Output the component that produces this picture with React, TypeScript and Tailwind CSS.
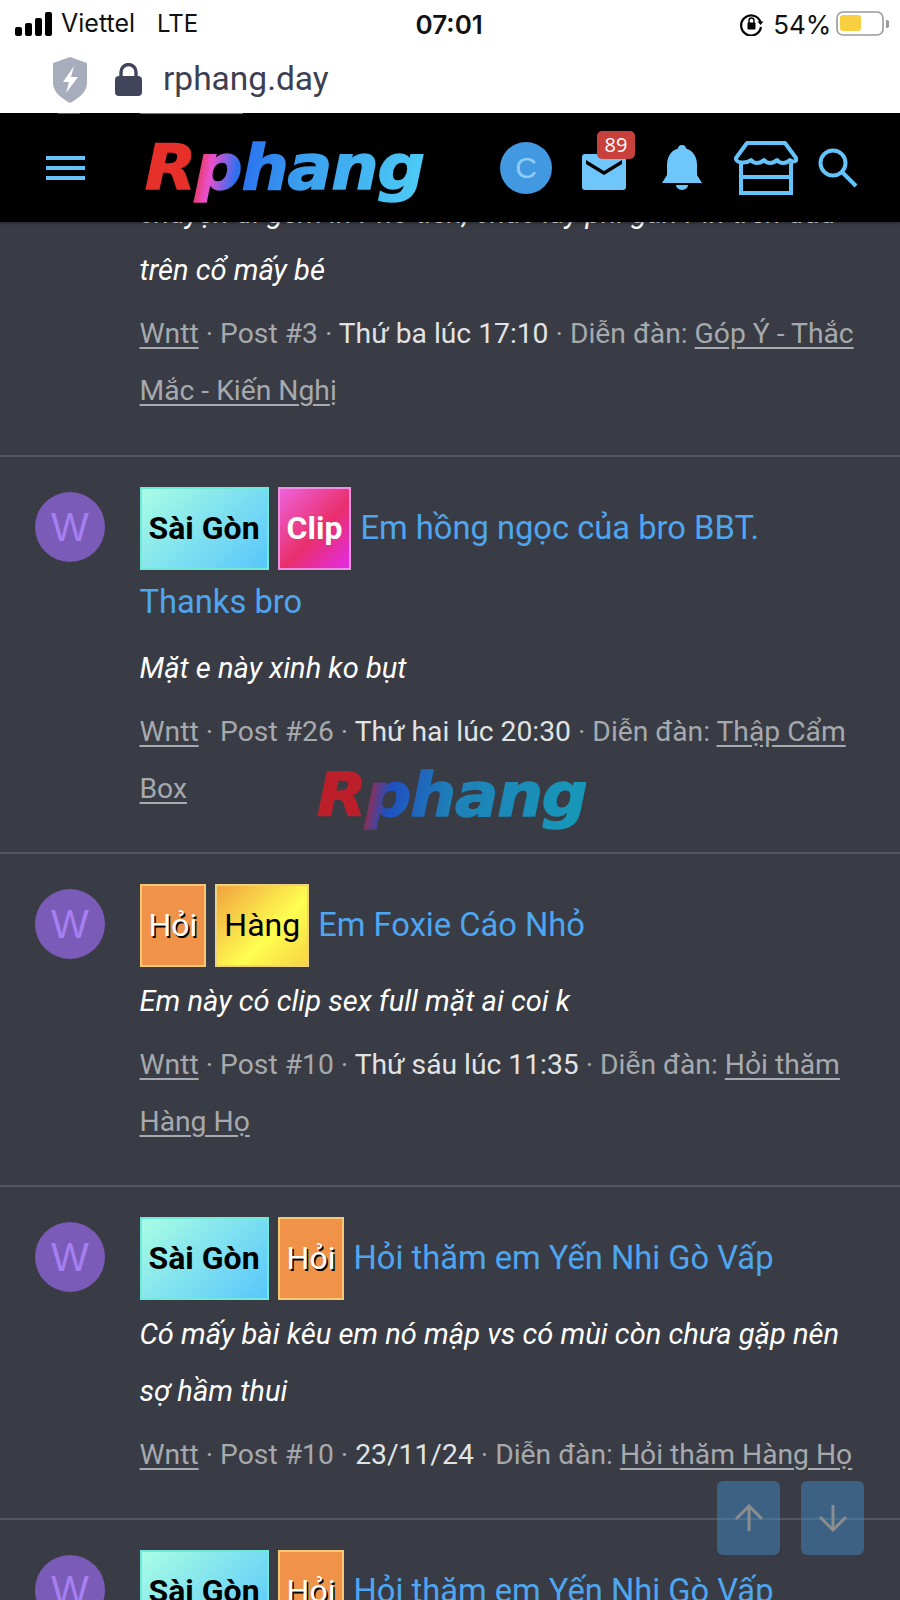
import React from 'react';

type BadgeKind = 'saigon' | 'clip' | 'hoi' | 'hang';

interface IPost {
  badges: BadgeKind[];
  title: string;
  desc: string;
  postNo: string;
  time: string;
  forum: string;
}

const badgeClass: Record<BadgeKind, string> = {
  saigon:
    'px-[7px] font-bold text-black border-[#6fe9da] bg-[linear-gradient(135deg,#a8fde4,#58c6fb)]',
  clip: 'px-[7px] font-bold text-white border-[#f28fe2] bg-[linear-gradient(135deg,#ee62dc,#e92f6c_55%,#e22ce6)]',
  hoi: 'px-[7px] text-white border-[#f6c873] bg-[#f09349] [text-shadow:1.5px_1.5px_0_#000]',
  hang: 'px-[7px] text-black border-[#eed27e] bg-[linear-gradient(135deg,#f0a23f,#ffff50_60%,#f6d443)]',
};

const badgeText: Record<BadgeKind, string> = {
  saigon: 'Sài Gòn',
  clip: 'Clip',
  hoi: 'Hỏi',
  hang: 'Hàng',
};

const posts: IPost[] = [
  {
    badges: ['saigon', 'clip'],
    title: 'Em hồng ngọc của bro BBT. Thanks bro',
    desc: 'Mặt e này xinh ko bụt',
    postNo: '#26',
    time: 'Thứ hai lúc 20:30',
    forum: 'Thập Cẩm Box',
  },
  {
    badges: ['hoi', 'hang'],
    title: 'Em Foxie Cáo Nhỏ',
    desc: 'Em này có clip sex full mặt ai coi k',
    postNo: '#10',
    time: 'Thứ sáu lúc 11:35',
    forum: 'Hỏi thăm Hàng Họ',
  },
  {
    badges: ['saigon', 'hoi'],
    title: 'Hỏi thăm em Yến Nhi Gò Vấp',
    desc: 'Có mấy bài kêu em nó mập vs có mùi còn chưa gặp nên sợ hầm thui',
    postNo: '#10',
    time: '23/11/24',
    forum: 'Hỏi thăm Hàng Họ',
  },
  {
    badges: ['saigon', 'hoi'],
    title: 'Hỏi thăm em Yến Nhi Gò Vấp',
    desc: '',
    postNo: '#10',
    time: '23/11/24',
    forum: 'Hỏi thăm Hàng Họ',
  },
];

const Meta: React.FC<{ postNo: string; time: string; forum: string }> = ({ postNo, time, forum }) => (
  <div className="mt-[6px] text-[28.25px] leading-[57px] text-[#a6a9ad]">
    <span className="underline underline-offset-[4px]">Wntt</span> · Post {postNo} ·{' '}
    <span className="text-[#e2e3e4]">{time}</span> · Diễn đàn:{' '}
    <span className="underline underline-offset-[4px]">{forum}</span>
  </div>
);

const PostRow: React.FC<{ post: IPost }> = ({ post }) => (
  <div className="flex border-b-2 border-[#52555b] pt-[34px] pb-[35px] pl-[35px] pr-[36px]">
    <div className="mt-[1px] flex h-[70px] w-[70px] shrink-0 items-center justify-center rounded-full bg-[#7b5bb8] font-['Liberation_Sans',sans-serif] text-[40px] text-[#a67ff0]">
      W
    </div>
    <div className="ml-[34.5px] min-w-0 flex-1">
      <div className="text-[32.7px] leading-[64px] text-[#4fa6f0]">
        {post.badges.map((b) => (
          <span
            key={b}
            className={`mr-[9px] -mt-[4px] inline-block h-[83px] border-2 align-middle text-[32px] leading-[78px] ${badgeClass[b]}`}
          >
            {badgeText[b]}
          </span>
        ))}
        {post.title}
      </div>
      <div className="mt-[6px] text-[29.1px] italic leading-[57px] text-white">{post.desc}</div>
      <Meta postNo={post.postNo} time={post.time} forum={post.forum} />
    </div>
  </div>
);

const App: React.FC = () => {
  return (
    <div className="relative h-[1600px] w-[900px] overflow-hidden bg-[#393c44] font-['Roboto',sans-serif]">
      {/* status bar */}
      <div className="relative z-20 flex h-[48px] items-center bg-white pl-[15px] font-['Inter',sans-serif] text-[25px] text-[#111]">
        <svg width="37" height="24" viewBox="0 0 37 24" fill="#000">
          <rect x="0" y="15" width="7" height="9" rx="2" />
          <rect x="10" y="11" width="7" height="13" rx="2" />
          <rect x="20" y="6" width="7" height="18" rx="2" />
          <rect x="30" y="0" width="7" height="24" rx="2" />
        </svg>
        <span className="ml-[9px] w-[96px]">Viettel</span>
        <span className="text-[24px]">LTE</span>
        <span className="ml-[216px] w-[70px] text-center text-[26px] font-semibold">07:01</span>
        <svg className="ml-[256px]" width="24" height="24" viewBox="0 0 24 24">
          <path d="M20.5 10 A10 10 0 1 0 21 15" fill="none" stroke="#000" strokeWidth="2.2" />
          <path d="M17.5 9.5 h6 l-3 3.5z" fill="#000" />
          <rect x="7.5" y="10.5" width="8" height="7" rx="1" fill="#000" />
          <path d="M9 11 V8.5 a2.5 2.5 0 0 1 5 0 V11" fill="none" stroke="#000" strokeWidth="1.4" />
        </svg>
        <span className="ml-[9px] text-[26px]">54%</span>
        <svg className="ml-[5px]" width="53" height="26" viewBox="0 0 53 26">
          <rect x="1" y="1" width="46" height="23" rx="6" fill="none" stroke="#9a9a9a" strokeWidth="1.6" />
          <rect x="4" y="4" width="21" height="16" rx="3" fill="#f8cf40" />
          <path d="M50 9 a4 4 0 0 1 0 8z" fill="#9a9a9a" />
        </svg>
      </div>

      {/* url bar */}
      <div className="relative z-20 flex h-[65px] items-center bg-white pb-[2px] text-[33.5px] text-[#3c4050]">
        <svg className="ml-[53px]" width="34" height="46" viewBox="0 0 34 46">
          <path d="M17 0 L34 6 V26 C34 36 24 42 17 46 C10 42 0 36 0 26 V6z" fill="#a8adbe" />
          <path d="M21 9 L10 25 H16 L13 36 L25 20 H18z" fill="#fff" />
        </svg>
        <svg className="ml-[28px]" width="27" height="33" viewBox="0 0 27 33">
          <path d="M6 15 V9 a7.5 7.5 0 0 1 15 0 V15" fill="none" stroke="#41445a" strokeWidth="3.4" />
          <rect x="0" y="13" width="27" height="20" rx="4" fill="#41445a" />
        </svg>
        <span className="ml-[21px]">rphang.day</span>
      </div>

      {/* site header */}
      <div className="relative z-10 flex h-[109px] items-center bg-black shadow-[0_1px_3px_rgba(0,0,0,0.4)]">
        <div className="absolute left-[58px] top-0 h-[1px] w-[22px] bg-[#5a4590]" />
        <div className="absolute left-[140px] top-0 h-[1px] w-[103px] bg-[#b06a3a]" />
        <div className="ml-[46px] flex w-[39px] flex-col gap-[6px]">
          <div className="h-[4px] bg-[#63c3fa]" />
          <div className="h-[4px] bg-[#63c3fa]" />
          <div className="h-[4px] bg-[#63c3fa]" />
        </div>
        <div className="ml-[60px] w-[297px] origin-left scale-x-[1.07] font-['DejaVu_Sans',sans-serif] text-[62px] font-bold italic leading-[70px] tracking-[-1px] [-webkit-text-stroke:1.5px_transparent] bg-[linear-gradient(100deg,#e8302a_16%,#ea50d0_22%,#2a70f0_30%,#3aa0ee_50%,#55dcf8_100%)] bg-clip-text text-transparent">
          Rphang
        </div>
        <div className="ml-[58px] flex h-[52px] w-[52px] items-center justify-center rounded-full bg-[#4299e1] font-['Liberation_Sans',sans-serif] text-[30px] text-[#90cdf4]">
          C
        </div>
        <div className="relative ml-[30px] h-[44px] w-[44px]">
          <svg className="mt-[8px]" width="44" height="36" viewBox="0 0 44 36">
            <path d="M3 0 H41 a3 3 0 0 1 3 3 V33 a3 3 0 0 1 -3 3 H3 a3 3 0 0 1 -3 -3 V3 a3 3 0 0 1 3 -3z" fill="#6ec6fa" />
            <path d="M4 6 L22 17 L40 6 V10 L22 21 L4 10z" fill="#000" />
          </svg>
          <span className="absolute left-[15px] top-[-15px] flex h-[28px] w-[38px] items-center justify-center rounded-[5px] bg-[#c8403b] font-['Open_Sans',sans-serif] text-[20px] text-white">
            89
          </span>
        </div>
        <svg className="ml-[36px]" width="40" height="46" viewBox="0 0 40 46" fill="#6ec6fa">
          <circle cx="20" cy="4" r="4" />
          <path d="M20 3 C30 3 35 11 35 20 V30 L40 38 H0 L5 30 V20 C5 11 10 3 20 3z" />
          <path d="M14 40 H26 a6 5 0 0 1 -12 0z" />
        </svg>
        <svg className="ml-[32px]" width="64" height="54" viewBox="0 0 64 54" fill="none" stroke="#63c3fa" strokeWidth="4">
          <path d="M13 2 H51 L62 17 C63 20 60 22 56 19 C52 23 46 23 43 19 C39 23 33 23 30 19 C26 23 20 23 17 19 C12 23 1 22 2 17z" strokeLinejoin="round" />
          <path d="M7 22 V52 H57 V22" />
          <path d="M7 36 H57" />
        </svg>
        <svg className="ml-[20px]" width="40" height="40" viewBox="0 0 40 40" fill="none" stroke="#63c3fa" strokeWidth="4">
          <circle cx="15" cy="15" r="12.5" />
          <path d="M24 24 L38 38" />
        </svg>
      </div>

      {/* list of threads, scrolled so the first one sits under the header */}
      <div className="-mt-[37px]">
        <div className="border-b-2 border-[#52555b] pb-[36px] pl-[139.5px] pr-[36px]">
          <div className="text-[29.1px] italic leading-[57px] text-white">
            chuyện đi gêm in Pho tiền, chắc lấy phí gắn Pin trên đầu trên cổ mấy bé
          </div>
          <div className="mt-[6px] text-[28.25px] leading-[57px] text-[#a6a9ad]">
            <span className="underline underline-offset-[4px]">Wntt</span> · Post #3 ·{' '}
            <span className="text-[#e2e3e4]">Thứ ba lúc 17:10</span> · Diễn đàn:{' '}
            <span className="underline underline-offset-[4px]">Góp Ý - Thắc Mắc - Kiến Nghị</span>
          </div>
        </div>
        {posts.map((p, i) => (
          <PostRow key={i} post={p} />
        ))}
      </div>

      {/* watermark */}
      <div className="pointer-events-none absolute left-[317px] top-[755px] origin-left scale-x-[1.07] font-['DejaVu_Sans',sans-serif] text-[60px] font-bold italic leading-[80px] tracking-[-1px] [-webkit-text-stroke:1.5px_transparent] bg-[linear-gradient(100deg,#bd1f2a_18%,#1f50c0_28%,#1f80b8_50%,#169ab8_100%)] bg-clip-text text-transparent">
        Rphang
      </div>

      {/* scroll buttons */}
      <div className="absolute left-[717px] top-[1481px] flex gap-[21px]">
        <div className="flex h-[74px] w-[63px] items-center justify-center rounded-[6px] bg-[#4299e1]/40">
          <svg width="28" height="28" viewBox="0 0 28 28" fill="none" stroke="#8a8d90" strokeWidth="3">
            <path d="M14 27 V2 M1 15 L14 2 L27 15" />
          </svg>
        </div>
        <div className="flex h-[74px] w-[63px] items-center justify-center rounded-[6px] bg-[#4299e1]/40">
          <svg width="28" height="28" viewBox="0 0 28 28" fill="none" stroke="#8a8d90" strokeWidth="3">
            <path d="M14 1 V26 M1 13 L14 26 L27 13" />
          </svg>
        </div>
      </div>
    </div>
  );
};

export default App;
